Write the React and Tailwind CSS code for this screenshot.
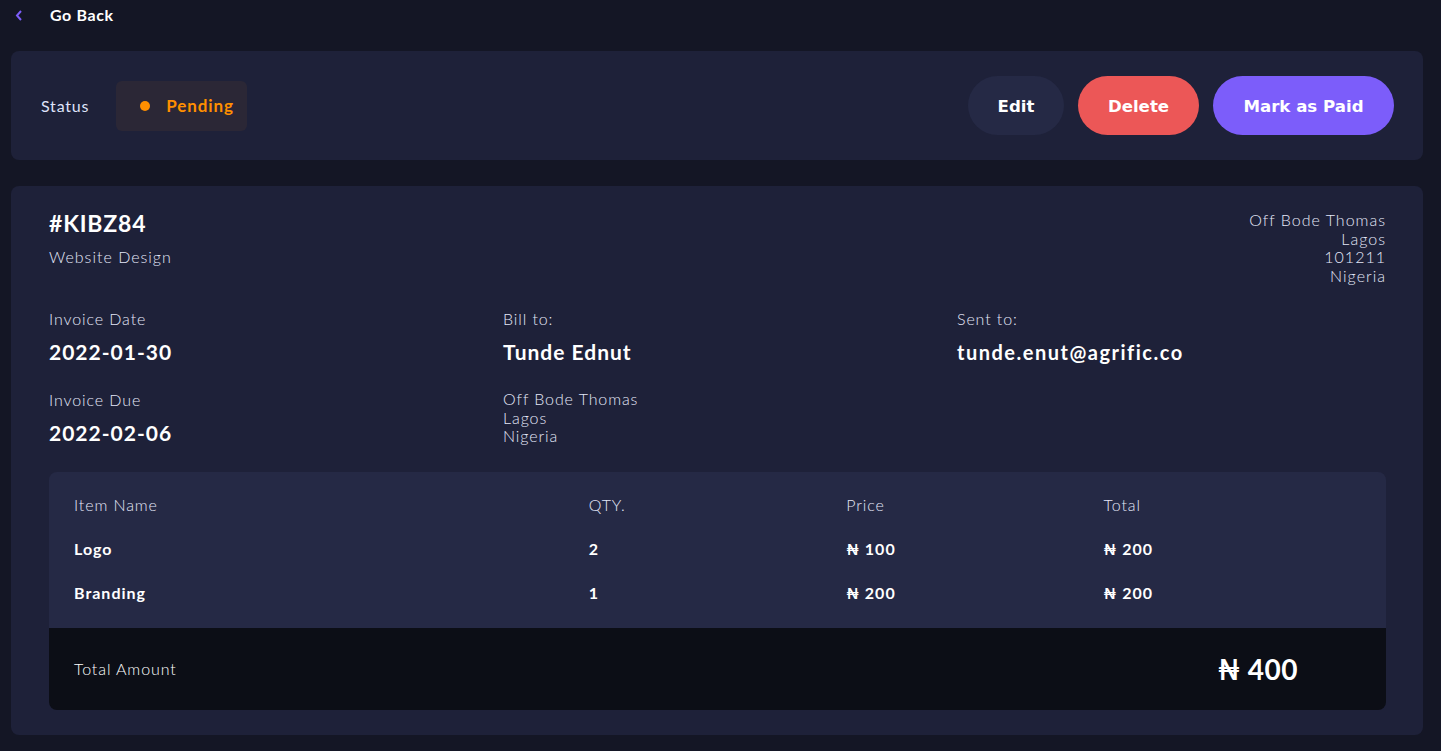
import React from 'react';

const items = [
  { name: 'Logo', qty: 2, price: 100, total: 200 },
  { name: 'Branding', qty: 1, price: 200, total: 200 },
];

function StatusBar() {
  return (
    <div className="flex items-center justify-between h-[109px] rounded-lg bg-[#1E2139] pl-[30px] pr-[29px]">
      <div className="flex items-center gap-[27px]">
        <span className="text-[16px] tracking-[0.8px] text-[#DFE3FA]">Status</span>
        <div className="flex items-center gap-[16px] h-[50px] w-[131px] rounded-md bg-[#2B2736] pl-[24px]">
          <span className="w-[10px] h-[10px] rounded-full bg-[#FF8F00]" />
          <span className="text-[17px] font-bold tracking-[0.9px] text-[#FF8F00]">Pending</span>
        </div>
      </div>
      <div className="flex items-center gap-[14px] font-['DejaVu_Sans',sans-serif] font-bold text-[16.6px] text-white">
        <button className="h-[59px] w-[96px] rounded-full bg-[#252945] pt-[3px]">Edit</button>
        <button className="h-[59px] w-[121px] rounded-full bg-[#EC5757] pt-[3px]">Delete</button>
        <button className="h-[59px] w-[181px] rounded-full bg-[#7C5DFA] pt-[3px]">Mark as Paid</button>
      </div>
    </div>
  );
}

function Label({ children }) {
  return <p className="text-[16px] font-light tracking-[0.9px] text-[#E4E7F8] leading-[20px]">{children}</p>;
}

function Value({ children }) {
  return <p className="mt-[10px] text-[21px] font-bold tracking-[1px] text-white leading-[26px]">{children}</p>;
}

function Details() {
  return (
    <div className="rounded-lg bg-[#1E2139] pl-[38px] pr-[37px] pt-[23px] pb-[25px]">
      <div className="flex justify-between">
        <div>
          <h1 className="text-[23px] font-bold tracking-[0.8px] leading-[28px] text-white">#KIBZ84</h1>
          <p className="mt-[8px] text-[16px] font-light tracking-[1px] text-[#E4E7F8]">Website Design</p>
        </div>
        <div className="text-right text-[16px] font-light tracking-[1px] leading-[18.7px] text-[#E4E7F8] pt-[2px]">
          <p>Off Bode Thomas</p>
          <p>Lagos</p>
          <p>101211</p>
          <p>Nigeria</p>
        </div>
      </div>

      <div className="grid grid-cols-[454px_454px_1fr] mt-[23px]">
        <div>
          <Label>Invoice Date</Label>
          <Value>2022-01-30</Value>
          <div className="mt-[25px]">
            <Label>Invoice Due</Label>
          </div>
          <Value>2022-02-06</Value>
        </div>
        <div>
          <Label>Bill to:</Label>
          <Value>Tunde Ednut</Value>
          <div className="mt-[25px] text-[16px] font-light tracking-[0.9px] leading-[18.7px] text-[#E4E7F8]">
            <p>Off Bode Thomas</p>
            <p>Lagos</p>
            <p>Nigeria</p>
          </div>
        </div>
        <div>
          <Label>Sent to:</Label>
          <p className="mt-[10px] text-[20px] font-bold tracking-[1.5px] text-white leading-[26px]">tunde.enut@agrific.co</p>
        </div>
      </div>

      <div className="mt-[26px] overflow-hidden rounded-lg">
        <div className="bg-[#252945] px-[25px] pt-[23px] pb-[25px]">
          <div className="grid grid-cols-[2fr_1fr_1fr_1fr] text-[16px] font-light tracking-[0.9px] text-[#E4E7F8] leading-[20px]">
            <span>Item Name</span>
            <span>QTY.</span>
            <span>Price</span>
            <span>Total</span>
          </div>
          {items.map((it) => (
            <div key={it.name} className="grid grid-cols-[2fr_1fr_1fr_1fr] mt-[24px] text-[16px] font-bold tracking-[1px] text-white leading-[20px]">
              <span>{it.name}</span>
              <span>{it.qty}</span>
              <span>₦ {it.price}</span>
              <span>₦ {it.total}</span>
            </div>
          ))}
        </div>
        <div className="flex items-center justify-between h-[82px] bg-[#0C0E16] pl-[25px] pr-[88px]">
          <span className="text-[16px] font-light tracking-[0.9px] text-white">Total Amount</span>
          <span className="text-[28px] font-bold tracking-[0.5px] text-white">₦ 400</span>
        </div>
      </div>
    </div>
  );
}

export default function App() {
  return (
    <div className="min-h-screen bg-[#141625] font-['Lato',sans-serif] pl-[11px] pr-[18px] pb-[16px]">
      <div className="flex items-start h-[51px] pt-[5px]">
        <button className="flex items-center gap-[27px] pl-[4px]">
          <svg width="8" height="11" viewBox="0 0 8 11" fill="none">
            <path d="M6 1L2 5.5L6 10" stroke="#7C5DFA" strokeWidth="2" />
          </svg>
          <span className="text-[16px] font-bold tracking-[0.6px] leading-[20px] text-white">Go Back</span>
        </button>
      </div>
      <StatusBar />
      <div className="mt-[26px]">
        <Details />
      </div>
    </div>
  );
}
